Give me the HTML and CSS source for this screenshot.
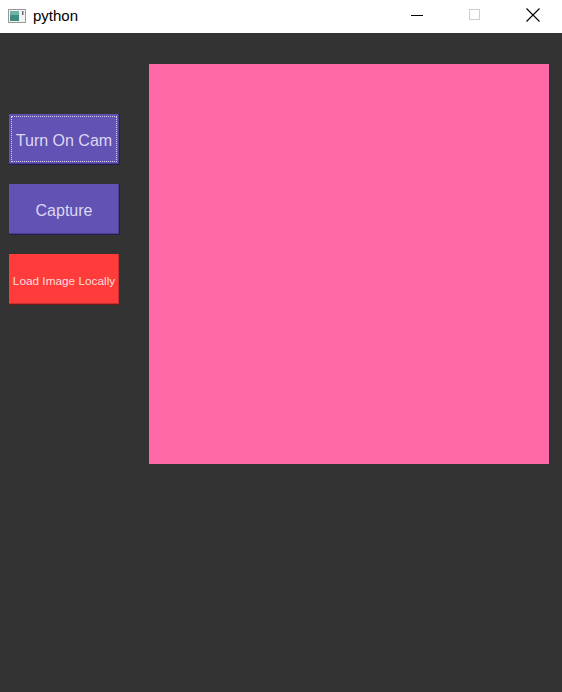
FILE: index.html
```html
<!DOCTYPE html>
<html>
<head>
<meta charset="utf-8">
<link rel="stylesheet" href="styles.css">
</head>
<body>
<div class="window">
  <div class="titlebar">
    <div class="title-left">
      <svg class="app-icon" width="18" height="14" viewBox="0 0 18 14">
        <rect x="0.5" y="0.5" width="17" height="13" fill="#f2f2f2" stroke="#9a9a9a"/>
        <rect x="2" y="2" width="9" height="10" fill="#3f8d80"/>
        <rect x="2" y="2" width="9" height="4" fill="#6fb3a6"/>
        <rect x="14" y="2" width="1.5" height="4" fill="#6a6a6a"/>
      </svg>
      <span class="title">python</span>
    </div>
    <div class="controls">
      <div class="ctrl">
        <svg width="12" height="12" viewBox="0 0 12 12"><line x1="0" y1="6.5" x2="12" y2="6.5" stroke="#000" stroke-width="1"/></svg>
      </div>
      <div class="ctrl">
        <svg width="12" height="12" viewBox="0 0 12 12"><rect x="0.5" y="0.5" width="10" height="10" fill="none" stroke="#cfcfcf"/></svg>
      </div>
      <div class="ctrl">
        <svg width="14" height="14" viewBox="0 0 14 14"><path d="M0.5 0.5 L13.5 13.5 M13.5 0.5 L0.5 13.5" stroke="#000" stroke-width="1.1"/></svg>
      </div>
    </div>
  </div>
  <div class="content">
    <div class="side">
      <button class="btn btn-purple focused"><span>Turn On Cam</span></button>
      <button class="btn btn-purple"><span>Capture</span></button>
      <button class="btn btn-red small"><span>Load Image Locally</span></button>
    </div>
    <div class="view"></div>
  </div>
</div>
</body>
</html>
```

FILE: styles.css
```css
html, body {
  margin: 0;
  padding: 0;
}
body {
  width: 562px;
  height: 692px;
  overflow: hidden;
  background: #333333;
  font-family: "Liberation Sans", Arial, sans-serif;
}
.window {
  display: flex;
  flex-direction: column;
  height: 692px;
}
.titlebar {
  height: 33px;
  background: #ffffff;
  display: flex;
  align-items: center;
  justify-content: space-between;
}
.title-left {
  display: flex;
  align-items: center;
  padding-left: 8px;
  gap: 7px;
}
.app-icon {
  display: block;
  margin-top: -2px;
}
.title {
  font-family: "Liberation Sans", Arial, sans-serif;
  font-size: 15px;
  color: #000;
  margin-top: -2px;
}
.controls {
  display: flex;
  height: 100%;
}
.ctrl {
  width: 58px;
  display: flex;
  align-items: center;
  justify-content: center;
  margin-top: -3px;
}
.ctrl svg {
  display: block;
}
.content {
  flex: 1;
  display: flex;
  align-items: flex-start;
}
.side {
  display: flex;
  flex-direction: column;
  gap: 19px;
  margin-top: 81px;
  margin-left: 9px;
}
.btn {
  box-sizing: border-box;
  width: 111px;
  height: 51px;
  padding: 2px 3px 3px 2px;
  margin: 0;
  border: none;
  box-shadow: inset -1px -1px 0 #241f4a, inset -2px -2px 0 #4b3f94;
  font-family: "Liberation Sans", Arial, sans-serif;
  font-size: 16px;
  color: #ddd7f2;
  display: flex;
  align-items: stretch;
  justify-content: center;
  white-space: nowrap;
}
.btn span {
  flex: 1;
  display: flex;
  align-items: center;
  justify-content: center;
  padding-top: 4px;
  border: 1px solid transparent;
}
.btn-purple {
  background: #6152b3;
}
.btn-red {
  background: #ff3b3b;
  box-shadow: inset -1px -1px 0 #6b1b1b, inset -2px -2px 0 #c93030;
  color: #ffdede;
}
.small {
  font-size: 11.8px;
}
.focused span {
  border: 1px dotted #d8d2ee;
}
.view {
  width: 400px;
  height: 400px;
  margin-top: 31px;
  margin-left: 29px;
  background: #ff69a5;
}
```
